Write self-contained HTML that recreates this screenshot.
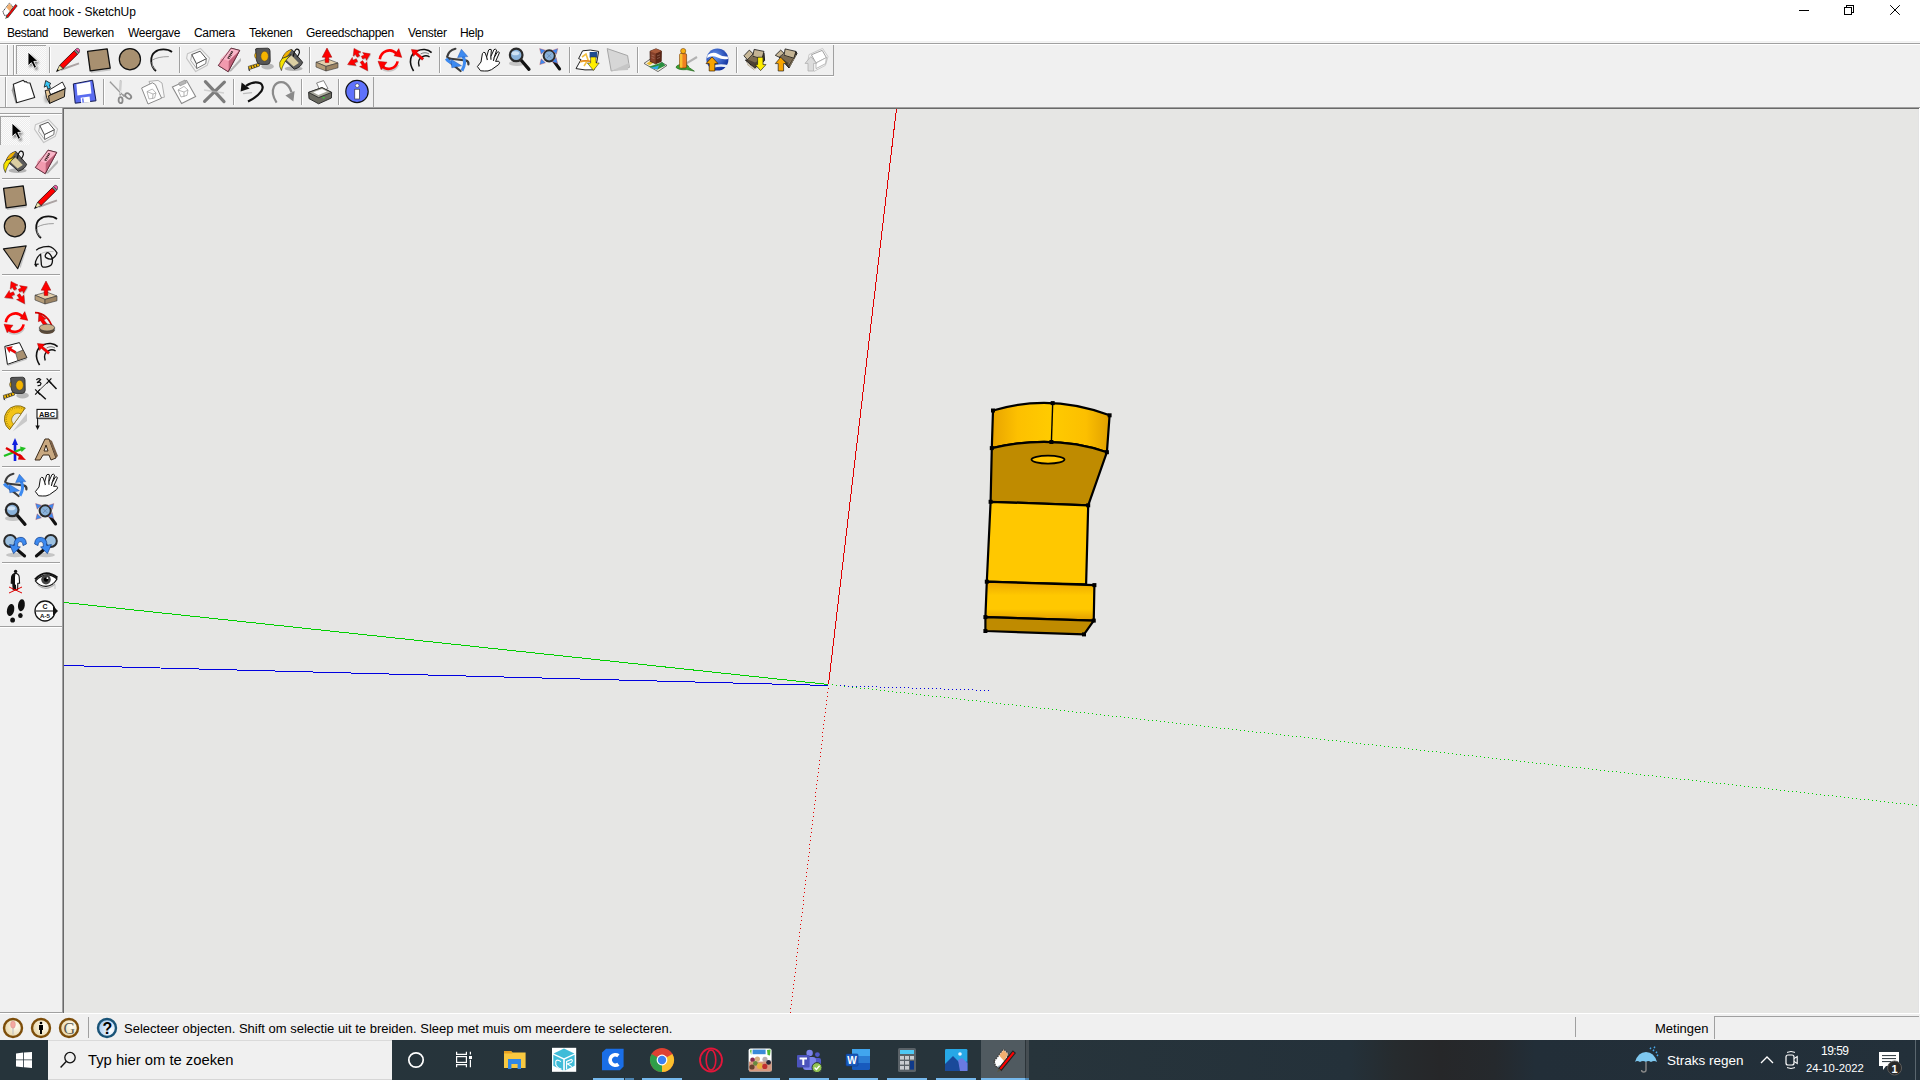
<!DOCTYPE html>
<html><head><meta charset="utf-8">
<style>
*{margin:0;padding:0;box-sizing:border-box}
html,body{width:1920px;height:1080px;overflow:hidden;background:#f0f0f0;font-family:"Liberation Sans",sans-serif;position:relative}
.a{position:absolute}
.t{position:absolute;white-space:pre;line-height:1}
#title{left:0;top:0;width:1920px;height:42px;background:#fff}
.menu{font-size:12px;color:#000;top:27px}
.hl{position:absolute;height:1px}
.vl{position:absolute;width:1px}
svg.i{position:absolute;overflow:visible}
</style></head><body>
<!-- title + menu -->
<div id="title" class="a"></div>
<div class="t" style="left:23px;top:6px;font-size:12px;letter-spacing:-0.1px">coat hook - SketchUp</div>
<div class="t menu" style="left:7px;letter-spacing:-0.43px">Bestand</div>
<div class="t menu" style="left:63px;letter-spacing:-0.3px">Bewerken</div>
<div class="t menu" style="left:128px;letter-spacing:-0.3px">Weergave</div>
<div class="t menu" style="left:194px;letter-spacing:-0.3px">Camera</div>
<div class="t menu" style="left:249px;letter-spacing:-0.3px">Tekenen</div>
<div class="t menu" style="left:306px;letter-spacing:-0.3px">Gereedschappen</div>
<div class="t menu" style="left:408px;letter-spacing:-0.3px">Venster</div>
<div class="t menu" style="left:460px;letter-spacing:-0.3px">Help</div>
<!-- window controls -->
<svg class="a" style="left:1790px;top:0" width="130" height="22"><g fill="none" stroke="#000" stroke-width="1" shape-rendering="crispEdges">
<path d="M9,10.5 H19"/>
<path d="M54.5,7.5 H61.5 V14.5 H54.5 Z"/>
<path d="M56.5,7 V5.5 H63.5 V12.5 H62"/>
</g><path d="M100.2,5.2 L109.8,14.8 M109.8,5.2 L100.2,14.8" stroke="#000" stroke-width="1"/></svg>
<!-- dock lines -->
<div class="hl" style="left:0;top:41px;width:1920px;background:#f1f1f1"></div><div class="hl" style="left:0;top:42px;width:1920px;background:#f5f5f5"></div>
<div class="hl" style="left:0;top:43px;width:1920px;background:#a0a0a0"></div>
<div class="hl" style="left:0;top:44px;width:1920px;background:#fff"></div>


<svg width="0" height="0" style="position:absolute"><defs><filter id="blur1" x="-50%" y="-50%" width="200%" height="200%"><feGaussianBlur stdDeviation=".9"/></filter>
<symbol id="s_select" viewBox="0 0 24 24" overflow="visible"><g transform="translate(9,4) scale(1.1) translate(-9,-5)">
<path d="M9,5 L9,17.6 L12.1,14.7 L14.7,19.8 L16.8,18.8 L14.3,13.6 L18.1,13.4 Z" fill="#000" opacity=".55" transform="translate(1.4,1.8)" filter="url(#blur1)"/>
<path d="M9,5 L9,17.6 L12.1,14.7 L14.7,19.8 L16.8,18.8 L14.3,13.6 L18.1,13.4 Z" fill="#000" stroke="#fff" stroke-width=".8" stroke-linejoin="round"/>
</g></symbol>
<symbol id="s_pencil" viewBox="0 0 24 24" overflow="visible">
<path d="M5,21.8 L23,15.4" stroke="#9a9090" stroke-width="2" opacity=".8"/>
<path d="M3.6,17.2 L18.2,2.8 L21.6,6.2 L7,20.6 Z" fill="#ff0000" stroke="#2a0000" stroke-width=".8"/>
<path d="M18.2,2.8 L19.6,1.4 L23,4.8 L21.6,6.2 Z" fill="#8a8a8a" stroke="#222" stroke-width=".6"/>
<path d="M19.6,1.4 L20.6,.4 Q22,-.2 23.4,1.4 Q24,2.8 23,4.8 Z" fill="#ff5aa8" stroke="#222" stroke-width=".6"/>
<path d="M.5,23.6 L3.6,17.2 L7,20.6 Z" fill="#f2e6a8" stroke="#222" stroke-width=".7"/>
<path d="M.5,23.6 L1.6,21 L3,22.4 Z" fill="#000"/>
</symbol>
<symbol id="s_rect" viewBox="0 0 24 24" overflow="visible">
<path d="M4,25 L23.4,22.4 L24,20.5 L4,22.8 Z" fill="#aaa" opacity=".6"/>
<path d="M0.6,3.4 L20.2,0.8 L23.2,20.2 L3.2,22.9 Z" fill="#a89070" stroke="#111" stroke-width="1.3" stroke-linejoin="round"/>
</symbol>
<symbol id="s_circle" viewBox="0 0 24 24" overflow="visible">
<circle cx="12.6" cy="12" r="10.6" fill="#999" opacity=".5"/>
<circle cx="11.9" cy="11.2" r="10.6" fill="#a89070" stroke="#111" stroke-width="1.2"/>
</symbol>
<symbol id="s_arc" viewBox="0 0 24 24" overflow="visible">
<path d="M7,23 C1,18 .6,8 6,4 C10,.6 18.5,.4 23,4" fill="none" stroke="#111" stroke-width="1.8"/>
<path d="M3,12.2 Q9,8.6 19.8,8.6" fill="none" stroke="#888" stroke-width=".8"/>
<path d="M3,14 Q2.2,19 6.5,22" fill="none" stroke="#aaa" stroke-width=".8"/>
</symbol>
<symbol id="s_comp" viewBox="0 0 24 24" overflow="visible">
<path d="M1.4,5.8 L14.6,.6 L23.6,10.2 L21.3,17.2 L9.7,23.6 L.6,10.4 Z" fill="#f4f4f4" stroke="#c4c4c4" stroke-width="1.1" stroke-linejoin="round"/>
<path d="M5.8,6.5 L10.4,15.6 L10.7,20.5 L4.7,12.5 Z" fill="#f6f6f6" stroke="#9a9a9a" stroke-width=".8"/>
<path d="M10.4,15.6 L20.3,10.7 L19.8,15.6 L10.7,20.5 Z" fill="#fff" stroke="#666" stroke-width=".9"/>
<path d="M5.8,6.5 L14.1,3.2 L20.3,10.7 L10.4,15.6 Z" fill="#fff" stroke="#555" stroke-width="1"/>
</symbol>
<symbol id="s_eraser" viewBox="0 0 24 24" overflow="visible">
<path d="M11.6,23.4 L23.8,10 L24,13 L14,23.6 Z" fill="#8a8a8a" opacity=".6"/>
<path d="M1.4,17.5 L14.1,.2 L22.7,2.4 L11.2,23.7 Z" fill="#f4a6b8" stroke="#4a1a28" stroke-width=".8" stroke-linejoin="round"/>
<path d="M3.9,10.7 L14.1,.2 L22.7,2.4 L11.7,13.1 Z" fill="#f9b6c8"/>
<path d="M1.4,17.5 L3.9,10.7 L11.7,13.1 L11.2,23.7 Z" fill="#f29aae"/>
<path d="M11.7,13.1 L22.7,2.4 L21.8,5 L11.6,22.6 Z" fill="#c06078"/>
<path d="M1.4,17.5 L14.1,.2 L22.7,2.4 L11.2,23.7 Z" fill="none" stroke="#4a1a28" stroke-width=".7" stroke-linejoin="round"/>
<g stroke="#2a1a1a" stroke-width="1"><path d="M10.6,9.8 L12.6,10.6 M11.4,8.2 L13.6,9 M12.4,6.6 L14.6,7.4 M13.2,5 L15.2,5.8 M14,3.6 L16,4.2"/><path d="M10.8,10.4 L15.6,3.6" stroke-width=".6"/></g>
</symbol>
<symbol id="s_tape" viewBox="0 0 24 24" overflow="visible">
<ellipse cx="19.6" cy="18.4" rx="6.2" ry="3" fill="#8a8a8a" opacity=".55"/>
<path d="M.3,18.4 L10.8,15.2 L11.6,18 L1.4,21.6 Z" fill="#f3b800" stroke="#222" stroke-width=".6"/>
<g stroke="#222" stroke-width=".9"><path d="M3,17.8 L3.8,20.6 M5.6,17 L6.4,19.8 M8.2,16.2 L9,19"/></g>
<path d="M.3,18.4 L1.4,21.6 L2.4,23.6 L.6,22.4 Z" fill="#222"/>
<path d="M7.6,1 Q8.6,.2 11,.4 L19.6,.2 Q22,.4 22,3 L22.2,13.4 Q22,16 19.4,16.4 L12.6,16.4 Q8.8,16.2 8.4,12 Z" fill="#565656" stroke="#2a2a2a" stroke-width=".9"/>
<ellipse cx="16.6" cy="8.2" rx="3.8" ry="5" fill="#f5b400" stroke="#3a3a3a" stroke-width=".5"/>
<path d="M8.2,4.8 Q6.6,5 6.6,7.6 Q6.6,10.4 8.4,10.4 Z" fill="#f5b400" stroke="#2a2a2a" stroke-width=".5"/>
</symbol>
<symbol id="s_paint" viewBox="0 0 24 24" overflow="visible">
<ellipse cx="14.6" cy="20.6" rx="9" ry="2.4" fill="#8a8a8a" opacity=".6"/>
<path d="M3.2,10.4 Q6,3 12.8,1.4 L23.6,14.2 Q22.4,19 15.4,21.2 Z" fill="#5c5c5c" stroke="#1a1a1a" stroke-width=".9" stroke-linejoin="round"/>
<path d="M7,11.4 L12.6,7.6 L19.8,15 L14.6,18.6 Z" fill="#dccfa2"/>
<path d="M3.2,10.4 Q6,3 12.8,1.4 Q10,6 7.4,8.4 Z" fill="#f0b000"/>
<path d="M3.2,10.4 Q-.4,14 .8,18.6 L2.4,22.6 L3.4,19 Q5,13.6 12,6.4 Q9,8.6 3.2,10.4 Z" fill="#f8e400" stroke="#1a1a1a" stroke-width=".6"/>
<path d="M14.3,8.7 Q15.4,2 17.4,1.2 Q20.4,.6 20.4,4.6 Q19.8,7 18,9.2" fill="none" stroke="#111" stroke-width="1.2"/>
</symbol>
<symbol id="s_pushpull" viewBox="0 0 24 24" overflow="visible">
<path d="M1,14.2 L12.6,11 L23,15 L11,18.4 Z" fill="#e2cfac" stroke="#333" stroke-width=".6"/>
<path d="M1,14.2 L11,18.4 L11,23 L1,19 Z" fill="#b49c78" stroke="#333" stroke-width=".6"/>
<path d="M11,18.4 L23,15 L23,19.8 L11,23 Z" fill="#9c8464" stroke="#333" stroke-width=".6"/>
<path d="M10.2,14.4 L10.2,9.2 L7.2,9.2 L12,0 L16.8,9.2 L13.8,9.2 L13.8,14.4 Z" fill="#ff0000" stroke="#8a0000" stroke-width=".5"/>
</symbol>
<symbol id="s_move" viewBox="0 0 24 24" overflow="visible">
<path d="M13.7,7.8 L12.1,4.9 L15.0,4.0 L8.0,0.4 L7.2,8.2 L9.5,6.3 L11.0,9.2Z M16.6,11.1 L19.6,9.7 L20.3,12.5 L24.3,5.8 L16.6,4.6 L18.3,6.9 L15.3,8.3Z M10.3,10.7 L6.9,12.3 L6.3,9.4 L1.6,16.6 L10.1,17.4 L8.3,15.1 L11.6,13.4Z M14.1,14.3 L16.4,17.6 L13.5,18.6 L21.6,22.7 L20.9,13.7 L18.8,15.9 L16.6,12.6Z" fill="#999" opacity=".5" transform="translate(.8,1)"/>
<path d="M13.7,7.8 L12.1,4.9 L15.0,4.0 L8.0,0.4 L7.2,8.2 L9.5,6.3 L11.0,9.2Z M16.6,11.1 L19.6,9.7 L20.3,12.5 L24.3,5.8 L16.6,4.6 L18.3,6.9 L15.3,8.3Z M10.3,10.7 L6.9,12.3 L6.3,9.4 L1.6,16.6 L10.1,17.4 L8.3,15.1 L11.6,13.4Z M14.1,14.3 L16.4,17.6 L13.5,18.6 L21.6,22.7 L20.9,13.7 L18.8,15.9 L16.6,12.6Z" fill="#ff0000" stroke="#900" stroke-width=".4"/>
</symbol>
<symbol id="s_rotate" viewBox="0 0 24 24" overflow="visible">
<path d="M3.6,18.4 C8,23.4 17,22.6 20.6,15.6" fill="none" stroke="#999" stroke-width="2" opacity=".5" transform="translate(.6,1.2)"/>
<path d="M2.8,11.2 C4,3 13.6,-.6 19.2,5.4" fill="none" stroke="#ff0000" stroke-width="2.6"/>
<path d="M17,7.8 L21.8,.6 L24.8,9.4 Z" fill="#ff0000" stroke="#900" stroke-width=".4"/>
<path d="M20.6,13.4 C19.4,20.6 9.6,23.6 5,17.6" fill="none" stroke="#ff0000" stroke-width="2.6"/>
<path d="M1,13.2 L10,14.2 L4.2,21.8 Z" fill="#ff0000" stroke="#900" stroke-width=".4"/>
</symbol>
<symbol id="s_followme" viewBox="0 0 24 24" overflow="visible">
<path d="M5.6,23 C0,14 2.4,6 9,3 C14,.6 20,1 23.6,4.6" fill="none" stroke="#111" stroke-width="1.6"/>
<path d="M11.2,18.6 C9.6,14 11,10.4 14.6,8.6 C17,7.4 19.6,7.6 21.6,9" fill="none" stroke="#111" stroke-width="1.4"/>
<path d="M12.6,6 C15.6,4.2 18.6,4.4 21,6" fill="none" stroke="#777" stroke-width="1"/>
<path d="M3.4,1.4 L10.8,2.2 L8.8,4.4 L15.8,10.2 L14.2,12.2 L7.2,6.2 L5.6,8.4 Z" fill="#ff0000" stroke="#800" stroke-width=".4"/>
</symbol>
<symbol id="s_orbit" viewBox="0 0 24 24" overflow="visible">
<path d="M10.4,.8 Q3.4,2.6 2.2,8.8 Q2.6,10.6 8,11 L20.6,12.4 Q24,13.4 23.4,16.4 M3.4,11.6 Q4.6,14.6 8,17 L15.6,23" fill="none" stroke="#3c3c3c" stroke-width="2.2" stroke-linecap="round"/>
<path d="M17,22.6 Q21.6,15 18,8" fill="none" stroke="#3d8af0" stroke-width="3"/>
<path d="M12.6,9.6 L16.4,1.2 L22.8,8.6 Z" fill="#3d8af0" stroke="#1a4aa0" stroke-width=".4"/>
<path d="M1.2,10.6 Q3.6,14.4 9.6,15.6" fill="none" stroke="#3d8af0" stroke-width="3"/>
<path d="M6,11.2 L16.6,17.8 L6.8,19.8 Z" fill="#3d8af0" stroke="#1a4aa0" stroke-width=".4"/>
</symbol>
<symbol id="s_pan" viewBox="0 0 24 24" overflow="visible">
<path d="M1.4,18.6 L5,14 L6.4,5.6 Q7.4,3.6 9,4.6 L10.6,9 L12.6,2 Q14,.6 15.4,1.8 L14.8,8.6 L18,1.6 Q19.6,.6 20.6,2 L18.2,9.6 L21.4,4 Q23,3.2 23.4,4.8 L19.6,13.4 L22.6,13.2 Q24.6,14.6 22.6,16.6 L15.6,21.6 Q12,23.6 8.4,23 L4.6,22.8 Z" fill="#fff" stroke="#111" stroke-width="1" stroke-linejoin="round"/>
<path d="M10.6,9 L11.4,12 M14.8,8.6 L15,11.8 M18.2,9.6 L17.4,12.8" stroke="#111" stroke-width="1.1"/>
</symbol>
<symbol id="s_zoom" viewBox="0 0 24 24" overflow="visible">
<ellipse cx="10" cy="15.4" rx="8" ry="2.6" fill="#999" opacity=".5"/>
<path d="M14,12 L22,21.4" stroke="#111" stroke-width="3.2" stroke-linecap="round"/>
<circle cx="9.2" cy="6.9" r="6.3" fill="#8ab2da" stroke="#2a2a2a" stroke-width="2.2"/>
<ellipse cx="8.4" cy="5.2" rx="3.8" ry="2" fill="#cfe2f4"/>
</symbol>
<symbol id="s_zoomext" viewBox="0 0 24 24" overflow="visible">
<path d="M15,12 L21.6,21" stroke="#111" stroke-width="3" stroke-linecap="round"/>
<circle cx="11.2" cy="7.8" r="5.6" fill="#8ab2da" stroke="#2a2a2a" stroke-width="2"/>
<path d="M9,5.6 L13.4,10 M13.4,5.6 L9,10" stroke="#6a8ab0" stroke-width=".8"/>
<g fill="#3d8af0" stroke="#c03030" stroke-width=".35">
<path d="M1.6,.6 L7.4,2.2 L3.2,6.2 Z"/>
<path d="M19.8,.6 L18.4,6.2 L14.2,2.4 Z"/>
<path d="M1.8,16.6 L3.2,10.8 L7.4,14.8 Z"/>
<path d="M19.6,15.4 L14.2,13.8 L18.2,9.6 Z"/>
</g>
</symbol>
<symbol id="s_phototex" viewBox="0 0 24 24" overflow="visible">
<path d="M1,20.6 L6,11.6 L3.6,10.6 L7.6,2.8 Q15,1 23.6,3.4 L22,13 L19,21.8 Q10,22.6 1,20.6 Z" fill="#fff" stroke="#222" stroke-width="1"/>
<path d="M7,9 L11,6 L13,12 L9,18 M5,14 Q11,12 18,14" fill="none" stroke="#f3c040" stroke-width="1.6"/>
<path d="M5.2,13.2 Q11,11.8 16,13.6" fill="none" stroke="#e08020" stroke-width="1.2"/>
<rect x="14.6" y="4" width="7.6" height="5.6" fill="#1e4c90"/>
<path d="M15.6,9 L21,9 L21,15 L24.2,15 L18.4,22.4 L12.4,15 L15.6,15 Z" fill="#ffee00" stroke="#333" stroke-width=".6"/>
</symbol>
<symbol id="s_terrain" viewBox="0 0 24 24" overflow="visible">
<path d="M1.2,.6 L21.6,7.6 L23.4,19.4 L5.2,23 Z" fill="#d6d6d6" stroke="#a6a6a6" stroke-width="1"/>
<path d="M5,23 L23,15 L22,22 Z" fill="#c6c6c6"/>
</symbol>
<symbol id="s_building" viewBox="0 0 24 24" overflow="visible">
<path d="M1,15.4 L9.4,9.6 L24,17.4 L15,23.6 Z" fill="#f2eedc" stroke="#4a4a4a" stroke-width=".8" stroke-linejoin="round"/>
<path d="M3.6,15.4 L8.6,12.2 L11.6,14 L6.6,17.2 Z" fill="#e8b830"/>
<path d="M5.6,18.8 L19.6,14.2 L22.4,17.4 L14.6,21.6 Z" fill="#2a9040"/>
<path d="M7.4,20 L16,17.4 L14.4,21.6 Z" fill="#30a8ea"/>
<path d="M7,3.2 L13,.8 L18.4,3 L18.2,13.4 L12.6,15.8 L7.2,13.4 Z" fill="#86402a" stroke="#3a1a10" stroke-width=".7" stroke-linejoin="round"/>
<path d="M12.6,5.4 L18.4,3 L18.2,13.4 L12.6,15.8 Z" fill="#5a2616"/>
<path d="M7,3.2 L13,.8 L18.4,3 L12.6,5.4 Z" fill="#a85a3a"/>
<path d="M8.6,7 L11.4,8 M8.6,9.6 L11.4,10.6 M14,8 L17,6.8 M14,10.6 L17,9.4" stroke="#c8a090" stroke-width=".6" opacity=".7"/>
</symbol>
<symbol id="s_person" viewBox="0 0 24 24" overflow="visible">
<path d="M12,15.6 L23,9" stroke="#999" stroke-width="2.2" opacity=".7"/>
<path d="M2,19.4 Q2.6,16.4 9,16.2 Q15,16.4 14.6,19.2 L20.4,23.2 L12.8,21.6 Q5,22.4 2,19.4 Z" fill="#3aa030" stroke="#1a5a10" stroke-width=".6"/>
<rect x="5.6" y="5.6" width="7" height="14.4" rx="1.4" fill="#f08020" stroke="#5a2a00" stroke-width=".6"/>
<rect x="5.8" y="6" width="2.6" height="13.6" fill="#f8c030"/>
<circle cx="9.2" cy="3" r="2.6" fill="#f8b010" stroke="#5a2a00" stroke-width=".5"/>
</symbol>
<symbol id="s_globe" viewBox="0 0 24 24" overflow="visible">
<defs><radialGradient id="gg" cx=".4" cy=".35" r=".7"><stop offset="0" stop-color="#6a9af0"/><stop offset="1" stop-color="#0a2a9a"/></radialGradient></defs>
<circle cx="12.4" cy="11.6" r="11" fill="url(#gg)"/>
<path d="M2.6,7 Q8,3 13,6 Q18,9 22.8,8.4 L23,11 Q17,12 12.6,9.6 Q7,6.6 2,10 Z" fill="#fff"/>
<path d="M7,18 Q14,15 23,17 L22,19.4 Q15,17.6 8,20 Z" fill="#e8eef8"/>
<path d="M1,15.6 L7,9 L13,15.6 L9.8,15.6 L9.8,23 L4.2,23 L4.2,15.6 Z" fill="#f8a400" stroke="#3a2000" stroke-width=".7"/>
</symbol>
<symbol id="s_getmodels" viewBox="0 0 24 24" overflow="visible">
<path d="M3.4,12.2 L12.7,20 L22.6,12.6 L22,5 L11,8.6 L5.4,11.7 Z" fill="#4e4232" stroke="#111" stroke-width=".9" stroke-linejoin="round"/>
<path d="M4.4,14.4 L12.6,20.6 M5.2,16.4 L12.4,22 M13,21 L21.6,15" stroke="#a89878" stroke-width=".8"/>
<path d="M1.9,7.8 L7.3,2.1 L11.2,5.8 L5.4,11.7 Z" fill="#c8b898" stroke="#111" stroke-width=".8" stroke-linejoin="round"/>
<path d="M12.2,1.4 L22,3.4 L20,10.7 L10.7,8.3 Z" fill="#c4b494" stroke="#111" stroke-width=".8" stroke-linejoin="round"/>
<path d="M5.8,11.6 L11,6.4 L10.8,8.6 L19.6,11 L13,14.6 Z" fill="#7c6c52"/>
<path d="M15.6,9.2 L21,9.2 L21,16.6 L24,16.6 L18.6,22.6 L13.2,16.6 L15.6,16.6 Z" fill="#ffee00" stroke="#222" stroke-width=".7" stroke-linejoin="round"/>
</symbol>
<symbol id="s_sharemodel" viewBox="0 0 24 24" overflow="visible">
<path d="M6.2,9.2 L16,20 L24,5.4 L22.9,3.4 L11.1,7.3 Z" fill="#4e4232" stroke="#111" stroke-width=".9" stroke-linejoin="round"/>
<path d="M16.6,18.6 L23,7 M15.4,16.6 L21.4,6.4" stroke="#a89878" stroke-width=".8"/>
<path d="M2.3,7.3 L7.7,2.1 L11.1,5.3 L6.2,9.2 Z" fill="#c8b898" stroke="#111" stroke-width=".8" stroke-linejoin="round"/>
<path d="M12.1,.9 L22.9,3.4 L20.9,10.2 L11.1,7.3 Z" fill="#c4b494" stroke="#111" stroke-width=".8" stroke-linejoin="round"/>
<path d="M7,9 L11,5.8 L11.1,7.6 L20.4,10.6 L15.4,15 Z" fill="#7c6c52"/>
<path d="M7.7,9.2 L13.6,15.6 L10.6,15.6 L10.6,23 L5.2,23 L5.2,15.6 L2.3,15.6 Z" fill="#f8a400" stroke="#222" stroke-width=".7" stroke-linejoin="round"/>
</symbol>
<symbol id="s_sharecomp" viewBox="0 0 24 24" overflow="visible">
<path d="M5,6.6 L18.6,.4 L24,8.6 L21.4,17.4 L10,23.4 L3.6,14.4 Z" fill="#f6f6f6" stroke="#cacaca" stroke-width="1" stroke-linejoin="round"/>
<path d="M7.4,6.8 L18.2,2.4 L22.4,9.6 L12,15 Z" fill="#fff" stroke="#8a8a8a" stroke-width=".8"/>
<path d="M12,15 L22.4,9.6 L21.6,15.6 L12,20.6 Z" fill="#fff" stroke="#aaa" stroke-width=".8"/>
<path d="M6.8,8.6 L12.6,15.4 L9.6,15.4 L9.6,23 L4,23 L4,15.4 L1,15.4 Z" fill="#dcdcdc" stroke="#b0b0b0" stroke-width=".8" stroke-linejoin="round"/>
</symbol>
<symbol id="s_new" viewBox="0 0 24 24" overflow="visible">
<path d="M.7,10.3 L2.3,4.2 L5.7,22.8 L4.6,23.4 Z" fill="#777" opacity=".7"/>
<path d="M2.3,4.2 L12.3,.3 L14,2 L15.2,1.6 L16.4,2.8 L19,3 L23.7,17.5 L5.7,22.8 Z" fill="#fff" stroke="#222" stroke-width="1.1" stroke-linejoin="round"/>
</symbol>
<symbol id="s_open" viewBox="0 0 24 24" overflow="visible">
<path d="M2,16.6 L5.4,14 L7,22.6 L3,22.6 Z" fill="#777" opacity=".5" filter="url(#blur1)"/>
<path d="M6.6,10.4 L20.4,2 L23.6,8.4 L8.6,14.6 Z" fill="#fff" stroke="#111" stroke-width=".9" stroke-linejoin="round"/>
<path d="M3.2,10.6 L6.8,9.8 L8.6,15.2 L7.6,23.4 L4.6,17.6 Z" fill="#e8c898" stroke="#111" stroke-width=".9" stroke-linejoin="round"/>
<path d="M6.6,15.8 L23,8.8 L22.4,16.8 L7.6,23.4 Z" fill="#b49c78" stroke="#111" stroke-width="1" stroke-linejoin="round"/>
<path d="M3.7,.6 L9,3.6 L7.4,4.8 L8.4,8.2 L5.8,9 L4.8,5.8 L2.2,7.2 Z" fill="#38c8f8" stroke="#111" stroke-width=".8" stroke-linejoin="round"/>
</symbol>
<symbol id="s_save" viewBox="0 0 24 24" overflow="visible">
<path d="M0.3,3.9 L19.6,0.2 L23,20.8 L2.2,23.2 Z" fill="#5a6cf0" stroke="#141a50" stroke-width="1" stroke-linejoin="round"/>
<path d="M3.4,4.2 L17.2,1.8 L18.4,13.4 L4.4,15.4 Z" fill="#fff"/>
<path d="M7.6,17.8 L16.6,16.6 L17.2,22.2 L8.2,23 Z" fill="#fff"/>
<path d="M9,18.4 L10.4,18.2 L10.9,22.6 L9.5,22.8 Z" fill="#5a6cf0"/>
</symbol>
<symbol id="s_cut" viewBox="0 0 24 24" overflow="visible">
<path d="M0,1.6 L14.6,16.6 M10.6,.4 L10.2,15.4" stroke="#9a9a9a" stroke-width="1.6"/>
<path d="M1,1.4 L13,14 M10.4,1 L10.4,14" stroke="#fff" stroke-width=".6"/>
<ellipse cx="18.2" cy="16" rx="3.4" ry="2.2" transform="rotate(40 18.2 16)" fill="none" stroke="#8a8a8a" stroke-width="1.8"/>
<ellipse cx="10.6" cy="20.2" rx="2" ry="3" fill="none" stroke="#8a8a8a" stroke-width="1.8"/>
</symbol>
<symbol id="s_copy" viewBox="0 0 24 24" overflow="visible">
<path d="M8,1.4 L17,.4 L21,3 L23.4,17.2 L14,18.6 Z" fill="#f8f8f8" stroke="#a8a8a8" stroke-width=".9"/>
<path d="M.6,8 L11.4,2.8 L14.4,4.6 L20.6,18.2 L7,24 Z" fill="#fff" stroke="#8a8a8a" stroke-width="1"/>
<path d="M6,11.6 L11.4,9 L15,13 L13.6,18 L8,19 Z M6,11.6 L12,14 L15,13 M12,14 L11.6,18.6" fill="none" stroke="#9a9a9a" stroke-width=".7"/>
</symbol>
<symbol id="s_paste" viewBox="0 0 24 24" overflow="visible">
<path d="M.4,7 L14.6,.6 L23.6,16.4 L9.6,23.4 Z" fill="#fff" stroke="#8a8a8a" stroke-width="1.1"/>
<path d="M6.6,3 L13,0 L14.4,3 L8,6 Z" fill="#b6b6b6" stroke="#8a8a8a" stroke-width=".6"/>
<path d="M6,10 L12,6.4 L16,10 L15,15.4 L9,17 Z M6,10 L12,12 L16,10 M12,12 L12,17" fill="none" stroke="#9a9a9a" stroke-width=".7"/>
</symbol>
<symbol id="s_delete" viewBox="0 0 24 24" overflow="visible">
<path d="M2.4,1.6 L21,21.6 M21.4,2.2 L1.6,21.4" stroke="#7c7c7c" stroke-width="3.2" stroke-linecap="round"/>
<path d="M1,10 L21,13" stroke="#bbb" stroke-width="1.4" opacity=".6"/>
</symbol>
<symbol id="s_undo" viewBox="0 0 24 24" overflow="visible">
<path d="M6,5.8 Q14,.6 20.4,3.2 Q24.4,6 21.4,11.2 Q16.6,17.6 8,21.6" fill="none" stroke="#111" stroke-width="2.2"/>
<path d="M.6,11.6 L1.6,2.4 L9.6,8.4 Z" fill="#111"/>
<path d="M3,13.6 L12,12.6" stroke="#999" stroke-width="1.2" opacity=".6"/>
</symbol>
<symbol id="s_redo" viewBox="0 0 24 24" overflow="visible">
<path d="M5.6,22.6 Q-.4,13.6 3,6.6 Q6,1 12.6,2.4 Q18,4.4 20.6,12.4" fill="none" stroke="#8a8a8a" stroke-width="2.2"/>
<path d="M23.6,11 L22.4,21.4 L14.4,15.4 Z" fill="#8a8a8a"/>
</symbol>
<symbol id="s_print" viewBox="0 0 24 24" overflow="visible">
<path d="M8.6,3 L15.6,.6 L20,8.6 L12.4,11.4 Z" fill="#fff" stroke="#666" stroke-width=".8"/>
<path d="M.6,12.4 L14,7.6 L23.6,12.4 L23.4,18 L10.6,23.8 L1,18.6 Z" fill="#6a6a60" stroke="#222" stroke-width=".9"/>
<path d="M.6,12.4 L14,7.6 L23.6,12.4 L10.6,17.6 Z" fill="#a8a89c" stroke="#222" stroke-width=".8"/>
<path d="M5.2,12.2 L14,9 L19,11.6 L10.4,15 Z" fill="#fff"/>
<rect x="14.6" y="17" width="2" height="1.4" fill="#30d030"/>
</symbol>
<symbol id="s_info" viewBox="0 0 24 24" overflow="visible">
<circle cx="12" cy="11.5" r="11.2" fill="#5f72fc" stroke="#111"  stroke-width="1.2"/>
<circle cx="12.2" cy="5.6" r="1.9" fill="#fff" stroke="#222" stroke-width=".5"/>
<rect x="9.8" y="9.2" width="4.6" height="9.8" fill="#fff" stroke="#222" stroke-width=".6"/>
</symbol>
<symbol id="s_polygon" viewBox="0 0 24 24" overflow="visible">
<path d="M16,6 L23.6,3 L17.6,22 L15,19 Z" fill="#999" opacity=".5"/>
<path d="M.4,2.9 L23.2,-.1 L14.7,22.8 Z" fill="#a89070" stroke="#111" stroke-width="1.1" stroke-linejoin="round"/>
</symbol>
<symbol id="s_freehand" viewBox="0 0 24 24" overflow="visible">
<path d="M6.6,8 Q11,5 19.6,5.6" fill="none" stroke="#bbb" stroke-width=".9"/>
<path d="M2.2,4.3 L4.9,2.3 Q9,.4 14.7,.4 Q19.7,1.4 23,6.8 Q22.4,9.6 18.6,12.6 Q15.6,14 12,11.6 Q10,9.6 13,6.8 Q15,6 17.4,10.4 Q19.6,14.4 17.4,18.7 Q14.6,21.2 9.1,21.2 Q7.4,20 7.4,18.7 L6.6,8.2 Q3.6,10 1.6,15.4 L1.3,18.4 L4.7,18.2" fill="none" stroke="#111" stroke-width="1.3" stroke-linejoin="round"/>
<path d="M1,18 L2.6,20.4" stroke="#111" stroke-width="1.8"/>
</symbol>
<symbol id="s_scale" viewBox="0 0 24 24" overflow="visible">
<path d="M1.8,4.4 L16.4,.6 L23.8,15.6 L4.4,22.4 Z" fill="#fff" stroke="#111" stroke-width="1"/>
<path d="M12.6,11 L20,8 L23.8,15.6 L14.8,18.6 Z" fill="#a89070" stroke="#333" stroke-width=".6"/>
<path d="M3.4,5.4 L9.4,4.6 L8.2,6.6 L13.2,9.6 L12.2,11.4 L7,8.4 L6.4,10.6 Z" fill="#ff0000" stroke="#800" stroke-width=".4"/>
<path d="M4.6,23.4 L23.8,17" stroke="#999" stroke-width="1.2" opacity=".6"/>
</symbol>
<symbol id="s_followme2" viewBox="0 0 24 24" overflow="visible">
<path d="M1,1.6 Q14,2 19,18" fill="none" stroke="#d00000" stroke-width="1.6"/>
<path d="M4,9 L8,1.6 L12,9.6 L9.6,9.6 L11,15 L7.6,16 L6.4,9 Z" fill="#ff0000" stroke="#800" stroke-width=".4" transform="rotate(-25 8 9)"/>
<ellipse cx="13" cy="19.6" rx="7.6" ry="3.4" fill="#5a4a3a"/>
<ellipse cx="13" cy="16.6" rx="7.6" ry="3.4" fill="#c8b08a" stroke="#333" stroke-width=".6"/>
<path d="M5.4,16.6 L5.4,19.6 M20.6,16.6 L20.6,19.6" stroke="#333" stroke-width=".6"/>
</symbol>
<symbol id="s_dimension" viewBox="0 0 24 24" overflow="visible">
<path d="M3.6,14.8 L15,4" stroke="#111" stroke-width=".8"/>
<path d="M15,4 L22.5,12 M3.6,14.8 L11.8,22.2" stroke="#111" stroke-width="1.5"/>
<path d="M12.6,1.4 L17.4,6.6 M17.4,1.4 L12.6,6.6 M1.2,12.4 L6,17.6 M6,12.4 L1.2,17.6" stroke="#111" stroke-width="1.2"/>
<path d="M2.4,3 Q4.6,.4 6.6,2.6 L3,5.8 Q5.8,4.2 7,6.6 Q6.6,9 3.6,8.6" fill="none" stroke="#111" stroke-width="1.2"/>
</symbol>
<symbol id="s_protractor" viewBox="0 0 24 24" overflow="visible">
<path d="M24,6 L9.6,24.6 L24,14 Z" fill="#999" opacity=".45"/>
<path d="M22.3,1 L6.6,22.7 A13.4,13.4 0 0 1 22.3,1 Z" fill="#f3c418" stroke="#6a5000" stroke-width=".8" stroke-linejoin="round"/>
<path d="M18,7 L10.6,17.2 A6.4,6.4 0 0 1 18,7 Z" fill="#e8e8e0" stroke="#7a6000" stroke-width=".6"/>
<path d="M6.6,22.7 A13.4,13.4 0 0 1 22.3,1" fill="none" stroke="#8a6a00" stroke-width="1.6" stroke-dasharray=".6 1.6" transform="translate(14.45 11.85) scale(.86) translate(-14.45 -11.85)"/>
</symbol>
<symbol id="s_text" viewBox="0 0 24 24" overflow="visible">
<rect x="5" y="4" width="20" height="9" fill="#aaa" opacity=".5"/>
<rect x="3" y="2.4" width="20" height="8.8" fill="#fff" stroke="#111" stroke-width="1.1"/>
<text x="13" y="9.8" font-family="Liberation Sans" font-size="7.4" font-weight="bold" text-anchor="middle" fill="#111">ABC</text>
<path d="M3.6,11 L3.6,21" stroke="#111" stroke-width="1.1"/>
<path d="M1.4,18.6 L3.6,23 L5.8,18.6 Z" fill="#111"/>
</symbol>
<symbol id="s_axes" viewBox="0 0 24 24" overflow="visible">
<path d="M12,23 L12,5" stroke="#1020e0" stroke-width="2.6"/>
<path d="M9,7 L12,0 L15,7 Z" fill="#1020e0"/>
<path d="M1,18 L19,11" stroke="#20c020" stroke-width="2.4"/>
<path d="M17,8.6 L23,10 L18.6,14 Z" fill="#20c020"/>
<path d="M3,10 L19,19" stroke="#e00000" stroke-width="2.4"/>
<path d="M16.6,15.6 L23,22 L15,21.6 Z" fill="#e00000"/>
</symbol>
<symbol id="s_text3d" viewBox="0 0 24 24" overflow="visible">
<path d="M1,22 L11,1 L15,1 L22,20 L17,22 L15,17 L9,17 L6,22 Z M10,13 L14,13 L12,7 Z" fill="#c8a880" stroke="#3a2a1a" stroke-width="1"/>
<path d="M15,1 L18,3 L24,18 L22,20 Z" fill="#7a6048"/>
</symbol>
<symbol id="s_prev" viewBox="0 0 24 24" overflow="visible">
<ellipse cx="12" cy="21" rx="9" ry="2.2" fill="#999" opacity=".5"/>
<path d="M11,13 L21.6,22" stroke="#111" stroke-width="3" stroke-linecap="round"/>
<circle cx="7.2" cy="7" r="6" fill="#9cc0e0" stroke="#2a2a2a" stroke-width="2"/>
<path d="M23.4,10 Q23,2.4 16.4,3.4 Q10.6,4.6 11.2,11.4 L6.6,10.6 L10.6,19.6 L17.4,13 L14.6,12.6 Q14,8.2 16.8,7.6 Q19.8,7.4 20,11.6 Z" fill="#3d8af0" stroke="#0a3a8a" stroke-width=".7" stroke-linejoin="round"/>
</symbol>
<symbol id="s_next" viewBox="0 0 24 24" overflow="visible"><g transform="translate(24,0) scale(-1,1)">
<ellipse cx="12" cy="21" rx="9" ry="2.2" fill="#999" opacity=".5"/>
<path d="M11,13 L21.6,22" stroke="#111" stroke-width="3" stroke-linecap="round"/>
<circle cx="7.2" cy="7" r="6" fill="#9cc0e0" stroke="#2a2a2a" stroke-width="2"/>
<path d="M23.4,10 Q23,2.4 16.4,3.4 Q10.6,4.6 11.2,11.4 L6.6,10.6 L10.6,19.6 L17.4,13 L14.6,12.6 Q14,8.2 16.8,7.6 Q19.8,7.4 20,11.6 Z" fill="#3d8af0" stroke="#0a3a8a" stroke-width=".7" stroke-linejoin="round"/>
</g></symbol>
<symbol id="s_poscam" viewBox="0 0 24 24" overflow="visible">
<path d="M12.5,4.2 Q9,5 8.6,8 L8.2,14.2 L9.8,14.2 L10.2,20.6 L12,20.6 L12.4,16 L12.8,20.6 L14.6,20.6 L14.8,14.2 L16.6,14.2 L16.2,8 Q16,5 12.5,4.2 Z" fill="#fff" stroke="#111" stroke-width="1.1" stroke-linejoin="round"/>
<path d="M12.5,4.2 Q9,5 8.6,8 L8.2,14.2 L9.8,14.2 L10.2,20.6 L12,20.6 L12,8 Z" fill="#111"/>
<circle cx="12.6" cy="2.4" r="1.7" fill="#111"/>
<path d="M6,18 L19,24 M19,18 L6,24" stroke="#e00000" stroke-width="1"/>
</symbol>
<symbol id="s_lookaround" viewBox="0 0 24 24" overflow="visible">
<path d="M1.4,12 Q12,1 23,10 Q19,17 12,17.4 Q5,17 1.4,12 Z" fill="#fff" stroke="#111" stroke-width="1.2"/>
<path d="M1,10.4 Q11,-1 23.4,8.6" fill="none" stroke="#111" stroke-width="2"/>
<circle cx="12" cy="10.6" r="4.8" fill="#444"/>
<circle cx="12" cy="10.6" r="2.2" fill="#000"/>
<circle cx="13.4" cy="9.2" r=".9" fill="#fff"/>
<path d="M4,16 Q12,23 21,15" fill="none" stroke="#999" stroke-width="1.4" opacity=".7"/>
<path d="M19,13 Q22,16 21,20" fill="none" stroke="#aaa" stroke-width="1" opacity=".6"/>
</symbol>
<symbol id="s_walk" viewBox="0 0 24 24" overflow="visible">
<ellipse cx="7.6" cy="11" rx="3.6" ry="6.2" transform="rotate(12 7.6 11)" fill="#111"/>
<ellipse cx="9.6" cy="21" rx="2.4" ry="2.6" fill="#111"/>
<ellipse cx="18.4" cy="6.2" rx="3.4" ry="6" transform="rotate(8 18.4 6.2)" fill="#111"/>
<ellipse cx="17.4" cy="16.4" rx="2.3" ry="2.5" fill="#111"/>
</symbol>
<symbol id="s_section" viewBox="0 0 24 24" overflow="visible">
<circle cx="11" cy="12" r="10" fill="#fff" stroke="#111" stroke-width="1.3"/>
<path d="M19,7 L24,12 L19,17 Z" fill="#111"/>
<path d="M1.6,12 L20,12" stroke="#111" stroke-width="1"/>
<text x="11" y="9.8" font-family="Liberation Sans" font-size="7" font-weight="bold" text-anchor="middle" fill="#111">C</text>
<text x="11" y="19.4" font-family="Liberation Sans" font-size="6.2" font-weight="bold" text-anchor="middle" fill="#111">A-5</text>
</symbol>
<symbol id="s_appicon" viewBox="0 0 24 24" overflow="visible">
<path d="M3,14 L9,3 L15,6 L10,16 Z" fill="#f4d0b0" stroke="#333" stroke-width=".8"/>
<path d="M4,12 Q3,16 6,17 L10,16" fill="#c8a080" stroke="#333" stroke-width=".6"/>
<path d="M7,17 L19,2 L21,3.6 L9,18.6 Z" fill="#e02020" stroke="#300" stroke-width=".5"/>
</symbol>
</defs></svg>
<div class="hl" style="left:0px;top:75px;width:834px;background:#a0a0a0"></div>
<div class="hl" style="left:0px;top:76px;width:834px;background:#ffffff"></div>
<div class="vl" style="left:833px;top:45px;height:31px;background:#a0a0a0"></div>
<div class="vl" style="left:7px;top:45px;height:30px;background:#a0a0a0"></div>
<div class="vl" style="left:8px;top:45px;height:30px;background:#ffffff"></div>
<div class="vl" style="left:13px;top:45px;height:30px;background:#a0a0a0"></div>
<div class="vl" style="left:14px;top:45px;height:30px;background:#ffffff"></div>
<div class="a" style="left:16px;top:45px;width:30px;height:29px;border-top:1px solid #a0a0a0;border-left:1px solid #a0a0a0;background:repeating-conic-gradient(#ececec 0 25%,#fbfbfb 0 50%) 0 0/2px 2px"></div>
<svg class="i" style="left:19.0px;top:48.0px" width="24" height="24"><use href="#s_select"/></svg>
<svg class="i" style="left:56.0px;top:48.0px" width="24" height="24"><use href="#s_pencil"/></svg>
<svg class="i" style="left:87.0px;top:48.0px" width="24" height="24"><use href="#s_rect"/></svg>
<svg class="i" style="left:118.0px;top:48.0px" width="24" height="24"><use href="#s_circle"/></svg>
<svg class="i" style="left:149.0px;top:48.0px" width="24" height="24"><use href="#s_arc"/></svg>
<svg class="i" style="left:186.0px;top:48.0px" width="24" height="24"><use href="#s_comp"/></svg>
<svg class="i" style="left:217.0px;top:48.0px" width="24" height="24"><use href="#s_eraser"/></svg>
<svg class="i" style="left:248.0px;top:48.0px" width="24" height="24"><use href="#s_tape"/></svg>
<svg class="i" style="left:279.0px;top:48.0px" width="24" height="24"><use href="#s_paint"/></svg>
<svg class="i" style="left:315.0px;top:48.0px" width="24" height="24"><use href="#s_pushpull"/></svg>
<svg class="i" style="left:346.0px;top:48.0px" width="24" height="24"><use href="#s_move"/></svg>
<svg class="i" style="left:377.0px;top:48.0px" width="24" height="24"><use href="#s_rotate"/></svg>
<svg class="i" style="left:408.0px;top:48.0px" width="24" height="24"><use href="#s_followme"/></svg>
<svg class="i" style="left:445.0px;top:48.0px" width="24" height="24"><use href="#s_orbit"/></svg>
<svg class="i" style="left:476.0px;top:48.0px" width="24" height="24"><use href="#s_pan"/></svg>
<svg class="i" style="left:507.0px;top:48.0px" width="24" height="24"><use href="#s_zoom"/></svg>
<svg class="i" style="left:538.0px;top:48.0px" width="24" height="24"><use href="#s_zoomext"/></svg>
<svg class="i" style="left:575.0px;top:48.0px" width="24" height="24"><use href="#s_phototex"/></svg>
<svg class="i" style="left:606.0px;top:48.0px" width="24" height="24"><use href="#s_terrain"/></svg>
<svg class="i" style="left:643.0px;top:48.0px" width="24" height="24"><use href="#s_building"/></svg>
<svg class="i" style="left:674.0px;top:48.0px" width="24" height="24"><use href="#s_person"/></svg>
<svg class="i" style="left:705.0px;top:48.0px" width="24" height="24"><use href="#s_globe"/></svg>
<svg class="i" style="left:742.0px;top:48.0px" width="24" height="24"><use href="#s_getmodels"/></svg>
<svg class="i" style="left:773.0px;top:48.0px" width="24" height="24"><use href="#s_sharemodel"/></svg>
<svg class="i" style="left:804.0px;top:48.0px" width="24" height="24"><use href="#s_sharecomp"/></svg>
<div class="vl" style="left:49px;top:47px;height:26px;background:#a0a0a0"></div>
<div class="vl" style="left:50px;top:47px;height:26px;background:#ffffff"></div>
<div class="vl" style="left:179px;top:47px;height:26px;background:#a0a0a0"></div>
<div class="vl" style="left:180px;top:47px;height:26px;background:#ffffff"></div>
<div class="vl" style="left:309px;top:47px;height:26px;background:#a0a0a0"></div>
<div class="vl" style="left:310px;top:47px;height:26px;background:#ffffff"></div>
<div class="vl" style="left:439px;top:47px;height:26px;background:#a0a0a0"></div>
<div class="vl" style="left:440px;top:47px;height:26px;background:#ffffff"></div>
<div class="vl" style="left:569px;top:47px;height:26px;background:#a0a0a0"></div>
<div class="vl" style="left:570px;top:47px;height:26px;background:#ffffff"></div>
<div class="vl" style="left:637px;top:47px;height:26px;background:#a0a0a0"></div>
<div class="vl" style="left:638px;top:47px;height:26px;background:#ffffff"></div>
<div class="vl" style="left:736px;top:47px;height:26px;background:#a0a0a0"></div>
<div class="vl" style="left:737px;top:47px;height:26px;background:#ffffff"></div>
<div class="hl" style="left:0px;top:107px;width:374px;background:#a0a0a0"></div>
<div class="vl" style="left:373px;top:77px;height:31px;background:#a0a0a0"></div>
<div class="vl" style="left:5px;top:77px;height:30px;background:#a0a0a0"></div>
<div class="vl" style="left:6px;top:77px;height:30px;background:#ffffff"></div>
<svg class="i" style="left:11.0px;top:80.0px" width="24" height="24"><use href="#s_new"/></svg>
<svg class="i" style="left:42.0px;top:80.0px" width="24" height="24"><use href="#s_open"/></svg>
<svg class="i" style="left:73.0px;top:80.0px" width="24" height="24"><use href="#s_save"/></svg>
<svg class="i" style="left:110.0px;top:80.0px" width="24" height="24"><use href="#s_cut"/></svg>
<svg class="i" style="left:141.0px;top:80.0px" width="24" height="24"><use href="#s_copy"/></svg>
<svg class="i" style="left:172.0px;top:80.0px" width="24" height="24"><use href="#s_paste"/></svg>
<svg class="i" style="left:203.0px;top:80.0px" width="24" height="24"><use href="#s_delete"/></svg>
<svg class="i" style="left:240.0px;top:80.0px" width="24" height="24"><use href="#s_undo"/></svg>
<svg class="i" style="left:271.0px;top:80.0px" width="24" height="24"><use href="#s_redo"/></svg>
<svg class="i" style="left:308.0px;top:80.0px" width="24" height="24"><use href="#s_print"/></svg>
<svg class="i" style="left:345.0px;top:80.0px" width="24" height="24"><use href="#s_info"/></svg>
<div class="vl" style="left:103px;top:79px;height:26px;background:#a0a0a0"></div>
<div class="vl" style="left:104px;top:79px;height:26px;background:#ffffff"></div>
<div class="vl" style="left:233px;top:79px;height:26px;background:#a0a0a0"></div>
<div class="vl" style="left:234px;top:79px;height:26px;background:#ffffff"></div>
<div class="vl" style="left:301px;top:79px;height:26px;background:#a0a0a0"></div>
<div class="vl" style="left:302px;top:79px;height:26px;background:#ffffff"></div>
<div class="vl" style="left:338px;top:79px;height:26px;background:#a0a0a0"></div>
<div class="vl" style="left:339px;top:79px;height:26px;background:#ffffff"></div>
<div class="hl" style="left:0px;top:113px;width:62px;background:#a0a0a0"></div>
<div class="hl" style="left:0px;top:114px;width:62px;background:#ffffff"></div>
<div class="a" style="left:0px;top:116px;width:30px;height:29px;border-top:1px solid #a0a0a0;border-left:1px solid #a0a0a0;background:repeating-conic-gradient(#ececec 0 25%,#fbfbfb 0 50%) 0 0/2px 2px"></div>
<svg class="i" style="left:2.6999999999999993px;top:119.0px" width="24" height="24"><use href="#s_select"/></svg>
<svg class="i" style="left:34.0px;top:119.0px" width="24" height="24"><use href="#s_comp"/></svg>
<svg class="i" style="left:2.6999999999999993px;top:149.5px" width="24" height="24"><use href="#s_paint"/></svg>
<svg class="i" style="left:34.0px;top:149.5px" width="24" height="24"><use href="#s_eraser"/></svg>
<svg class="i" style="left:2.6999999999999993px;top:184.5px" width="24" height="24"><use href="#s_rect"/></svg>
<svg class="i" style="left:34.0px;top:184.5px" width="24" height="24"><use href="#s_pencil"/></svg>
<svg class="i" style="left:2.6999999999999993px;top:215.0px" width="24" height="24"><use href="#s_circle"/></svg>
<svg class="i" style="left:34.0px;top:215.0px" width="24" height="24"><use href="#s_arc"/></svg>
<svg class="i" style="left:2.6999999999999993px;top:245.5px" width="24" height="24"><use href="#s_polygon"/></svg>
<svg class="i" style="left:34.0px;top:245.5px" width="24" height="24"><use href="#s_freehand"/></svg>
<svg class="i" style="left:2.6999999999999993px;top:280.5px" width="24" height="24"><use href="#s_move"/></svg>
<svg class="i" style="left:34.0px;top:280.5px" width="24" height="24"><use href="#s_pushpull"/></svg>
<svg class="i" style="left:2.6999999999999993px;top:311.0px" width="24" height="24"><use href="#s_rotate"/></svg>
<svg class="i" style="left:34.0px;top:311.0px" width="24" height="24"><use href="#s_followme2"/></svg>
<svg class="i" style="left:2.6999999999999993px;top:341.5px" width="24" height="24"><use href="#s_scale"/></svg>
<svg class="i" style="left:34.0px;top:341.5px" width="24" height="24"><use href="#s_followme"/></svg>
<svg class="i" style="left:2.6999999999999993px;top:376.5px" width="24" height="24"><use href="#s_tape"/></svg>
<svg class="i" style="left:34.0px;top:376.5px" width="24" height="24"><use href="#s_dimension"/></svg>
<svg class="i" style="left:2.6999999999999993px;top:407.0px" width="24" height="24"><use href="#s_protractor"/></svg>
<svg class="i" style="left:34.0px;top:407.0px" width="24" height="24"><use href="#s_text"/></svg>
<svg class="i" style="left:2.6999999999999993px;top:437.5px" width="24" height="24"><use href="#s_axes"/></svg>
<svg class="i" style="left:34.0px;top:437.5px" width="24" height="24"><use href="#s_text3d"/></svg>
<svg class="i" style="left:2.6999999999999993px;top:472.5px" width="24" height="24"><use href="#s_orbit"/></svg>
<svg class="i" style="left:34.0px;top:472.5px" width="24" height="24"><use href="#s_pan"/></svg>
<svg class="i" style="left:2.6999999999999993px;top:503.0px" width="24" height="24"><use href="#s_zoom"/></svg>
<svg class="i" style="left:34.0px;top:503.0px" width="24" height="24"><use href="#s_zoomext"/></svg>
<svg class="i" style="left:2.6999999999999993px;top:533.5px" width="24" height="24"><use href="#s_prev"/></svg>
<svg class="i" style="left:34.0px;top:533.5px" width="24" height="24"><use href="#s_next"/></svg>
<svg class="i" style="left:2.6999999999999993px;top:568.5px" width="24" height="24"><use href="#s_poscam"/></svg>
<svg class="i" style="left:34.0px;top:568.5px" width="24" height="24"><use href="#s_lookaround"/></svg>
<svg class="i" style="left:2.6999999999999993px;top:599.0px" width="24" height="24"><use href="#s_walk"/></svg>
<svg class="i" style="left:34.0px;top:599.0px" width="24" height="24"><use href="#s_section"/></svg>
<div class="hl" style="left:2px;top:178px;width:58px;background:#a0a0a0"></div>
<div class="hl" style="left:2px;top:179px;width:58px;background:#ffffff"></div>
<div class="hl" style="left:2px;top:274px;width:58px;background:#a0a0a0"></div>
<div class="hl" style="left:2px;top:275px;width:58px;background:#ffffff"></div>
<div class="hl" style="left:2px;top:370px;width:58px;background:#a0a0a0"></div>
<div class="hl" style="left:2px;top:371px;width:58px;background:#ffffff"></div>
<div class="hl" style="left:2px;top:466px;width:58px;background:#a0a0a0"></div>
<div class="hl" style="left:2px;top:467px;width:58px;background:#ffffff"></div>
<div class="hl" style="left:2px;top:562px;width:58px;background:#a0a0a0"></div>
<div class="hl" style="left:2px;top:563px;width:58px;background:#ffffff"></div>
<div class="hl" style="left:0px;top:626px;width:62px;background:#a0a0a0"></div>
<div class="hl" style="left:0px;top:627px;width:62px;background:#ffffff"></div>
<div class="hl" style="left:0px;top:1012px;width:62px;background:#a0a0a0"></div>
<div class="hl" style="left:0px;top:1013px;width:62px;background:#ffffff"></div>


<!-- viewport -->
<div class="a" style="left:62px;top:107px;width:1858px;height:1px;background:#a0a0a0"></div>
<div class="a" style="left:0;top:107px;width:62px;height:1px;background:#a0a0a0"></div>
<div class="a" style="left:63px;top:108px;width:1857px;height:1px;background:#696969"></div>
<div class="a" style="left:62px;top:108px;width:1px;height:905px;background:#a0a0a0"></div>
<div class="a" style="left:63px;top:108px;width:1px;height:905px;background:#696969"></div>
<div class="a" style="left:64px;top:109px;width:1854px;height:904px;background:#e6e6e4"></div>
<div class="a" style="left:1918px;top:109px;width:1px;height:904px;background:#e3e3e3"></div>
<div class="a" style="left:1919px;top:108px;width:1px;height:906px;background:#fff"></div>
<div class="a" style="left:62px;top:1013px;width:1858px;height:1px;background:#fff"></div>

<svg class="a" style="left:0;top:0" width="1920" height="1080">
<defs><clipPath id="vp"><rect x="64" y="109" width="1854" height="904"/></clipPath>
<linearGradient id="cylT" x1="0" y1="0" x2="1" y2="0"><stop offset="0" stop-color="#e8a400"/><stop offset=".22" stop-color="#fdc000"/><stop offset=".5" stop-color="#ffcb00"/><stop offset=".8" stop-color="#fcbf00"/><stop offset="1" stop-color="#e0a000"/></linearGradient>
<linearGradient id="cylB" x1="0" y1="0" x2="0" y2="1"><stop offset="0" stop-color="#eba600"/><stop offset=".35" stop-color="#ffc800"/><stop offset=".7" stop-color="#ffc800"/><stop offset="1" stop-color="#e09c00"/></linearGradient>
</defs><g clip-path="url(#vp)">
<g shape-rendering="crispEdges" stroke-width="1" fill="none">
<path d="M828.5,684.5 L896.5,108.5" stroke="#e00000"/>
<path d="M828.5,684.5 L64.5,602.5" stroke="#00d000"/>
<path d="M828.5,685.5 L64.5,665.5" stroke="#0000e0"/>
</g>
<path d="M828,688h1v1h-1zM827,692h1v1h-1zM827,696h1v1h-1zM826,700h1v1h-1zM826,704h1v1h-1zM825,708h1v1h-1zM825,712h1v1h-1zM824,716h1v1h-1zM824,720h1v1h-1zM823,724h1v1h-1zM823,728h1v1h-1zM822,732h1v1h-1zM822,736h1v1h-1zM822,740h1v1h-1zM821,744h1v1h-1zM821,748h1v1h-1zM820,752h1v1h-1zM820,756h1v1h-1zM819,760h1v1h-1zM819,764h1v1h-1zM818,768h1v1h-1zM818,772h1v1h-1zM817,776h1v1h-1zM817,780h1v1h-1zM816,784h1v1h-1zM816,788h1v1h-1zM815,792h1v1h-1zM815,796h1v1h-1zM815,800h1v1h-1zM814,804h1v1h-1zM814,808h1v1h-1zM813,812h1v1h-1zM813,816h1v1h-1zM812,820h1v1h-1zM812,824h1v1h-1zM811,828h1v1h-1zM811,832h1v1h-1zM810,836h1v1h-1zM810,840h1v1h-1zM809,844h1v1h-1zM809,848h1v1h-1zM809,852h1v1h-1zM808,856h1v1h-1zM808,860h1v1h-1zM807,864h1v1h-1zM807,868h1v1h-1zM806,872h1v1h-1zM806,876h1v1h-1zM805,880h1v1h-1zM805,884h1v1h-1zM804,888h1v1h-1zM804,892h1v1h-1zM803,896h1v1h-1zM803,900h1v1h-1zM803,904h1v1h-1zM802,908h1v1h-1zM802,912h1v1h-1zM801,916h1v1h-1zM801,920h1v1h-1zM800,924h1v1h-1zM800,928h1v1h-1zM799,932h1v1h-1zM799,936h1v1h-1zM798,940h1v1h-1zM798,944h1v1h-1zM797,948h1v1h-1zM797,952h1v1h-1zM796,956h1v1h-1zM796,960h1v1h-1zM796,964h1v1h-1zM795,968h1v1h-1zM795,972h1v1h-1zM794,976h1v1h-1zM794,980h1v1h-1zM793,984h1v1h-1zM793,988h1v1h-1zM792,992h1v1h-1zM792,996h1v1h-1zM791,1000h1v1h-1zM791,1004h1v1h-1zM790,1008h1v1h-1zM790,1012h1v1h-1z" fill="#e00000"/>
<path d="M832,684h1v1h-1zM836,685h1v1h-1zM840,685h1v1h-1zM844,686h1v1h-1zM848,686h1v1h-1zM852,687h1v1h-1zM856,687h1v1h-1zM860,688h1v1h-1zM864,688h1v1h-1zM868,688h1v1h-1zM872,689h1v1h-1zM876,689h1v1h-1zM880,690h1v1h-1zM884,690h1v1h-1zM888,691h1v1h-1zM892,691h1v1h-1zM896,692h1v1h-1zM900,692h1v1h-1zM904,692h1v1h-1zM908,693h1v1h-1zM912,693h1v1h-1zM916,694h1v1h-1zM920,694h1v1h-1zM924,695h1v1h-1zM928,695h1v1h-1zM932,696h1v1h-1zM936,696h1v1h-1zM940,696h1v1h-1zM944,697h1v1h-1zM948,697h1v1h-1zM952,698h1v1h-1zM956,698h1v1h-1zM960,699h1v1h-1zM964,699h1v1h-1zM968,700h1v1h-1zM972,700h1v1h-1zM976,700h1v1h-1zM980,701h1v1h-1zM984,701h1v1h-1zM988,702h1v1h-1zM992,702h1v1h-1zM996,703h1v1h-1zM1000,703h1v1h-1zM1004,704h1v1h-1zM1008,704h1v1h-1zM1012,704h1v1h-1zM1016,705h1v1h-1zM1020,705h1v1h-1zM1024,706h1v1h-1zM1028,706h1v1h-1zM1032,707h1v1h-1zM1036,707h1v1h-1zM1040,708h1v1h-1zM1044,708h1v1h-1zM1048,708h1v1h-1zM1052,709h1v1h-1zM1056,709h1v1h-1zM1060,710h1v1h-1zM1064,710h1v1h-1zM1068,711h1v1h-1zM1072,711h1v1h-1zM1076,712h1v1h-1zM1080,712h1v1h-1zM1084,712h1v1h-1zM1088,713h1v1h-1zM1092,713h1v1h-1zM1096,714h1v1h-1zM1100,714h1v1h-1zM1104,715h1v1h-1zM1108,715h1v1h-1zM1112,716h1v1h-1zM1116,716h1v1h-1zM1120,716h1v1h-1zM1124,717h1v1h-1zM1128,717h1v1h-1zM1132,718h1v1h-1zM1136,718h1v1h-1zM1140,719h1v1h-1zM1144,719h1v1h-1zM1148,720h1v1h-1zM1152,720h1v1h-1zM1156,720h1v1h-1zM1160,721h1v1h-1zM1164,721h1v1h-1zM1168,722h1v1h-1zM1172,722h1v1h-1zM1176,723h1v1h-1zM1180,723h1v1h-1zM1184,724h1v1h-1zM1188,724h1v1h-1zM1192,724h1v1h-1zM1196,725h1v1h-1zM1200,725h1v1h-1zM1204,726h1v1h-1zM1208,726h1v1h-1zM1212,727h1v1h-1zM1216,727h1v1h-1zM1220,728h1v1h-1zM1224,728h1v1h-1zM1228,728h1v1h-1zM1232,729h1v1h-1zM1236,729h1v1h-1zM1240,730h1v1h-1zM1244,730h1v1h-1zM1248,731h1v1h-1zM1252,731h1v1h-1zM1256,732h1v1h-1zM1260,732h1v1h-1zM1264,732h1v1h-1zM1268,733h1v1h-1zM1272,733h1v1h-1zM1276,734h1v1h-1zM1280,734h1v1h-1zM1284,735h1v1h-1zM1288,735h1v1h-1zM1292,736h1v1h-1zM1296,736h1v1h-1zM1300,736h1v1h-1zM1304,737h1v1h-1zM1308,737h1v1h-1zM1312,738h1v1h-1zM1316,738h1v1h-1zM1320,739h1v1h-1zM1324,739h1v1h-1zM1328,740h1v1h-1zM1332,740h1v1h-1zM1336,740h1v1h-1zM1340,741h1v1h-1zM1344,741h1v1h-1zM1348,742h1v1h-1zM1352,742h1v1h-1zM1356,743h1v1h-1zM1360,743h1v1h-1zM1364,744h1v1h-1zM1368,744h1v1h-1zM1372,744h1v1h-1zM1376,745h1v1h-1zM1380,745h1v1h-1zM1384,746h1v1h-1zM1388,746h1v1h-1zM1392,747h1v1h-1zM1396,747h1v1h-1zM1400,747h1v1h-1zM1404,748h1v1h-1zM1408,748h1v1h-1zM1412,749h1v1h-1zM1416,749h1v1h-1zM1420,750h1v1h-1zM1424,750h1v1h-1zM1428,751h1v1h-1zM1432,751h1v1h-1zM1436,751h1v1h-1zM1440,752h1v1h-1zM1444,752h1v1h-1zM1448,753h1v1h-1zM1452,753h1v1h-1zM1456,754h1v1h-1zM1460,754h1v1h-1zM1464,755h1v1h-1zM1468,755h1v1h-1zM1472,755h1v1h-1zM1476,756h1v1h-1zM1480,756h1v1h-1zM1484,757h1v1h-1zM1488,757h1v1h-1zM1492,758h1v1h-1zM1496,758h1v1h-1zM1500,759h1v1h-1zM1504,759h1v1h-1zM1508,759h1v1h-1zM1512,760h1v1h-1zM1516,760h1v1h-1zM1520,761h1v1h-1zM1524,761h1v1h-1zM1528,762h1v1h-1zM1532,762h1v1h-1zM1536,763h1v1h-1zM1540,763h1v1h-1zM1544,763h1v1h-1zM1548,764h1v1h-1zM1552,764h1v1h-1zM1556,765h1v1h-1zM1560,765h1v1h-1zM1564,766h1v1h-1zM1568,766h1v1h-1zM1572,767h1v1h-1zM1576,767h1v1h-1zM1580,767h1v1h-1zM1584,768h1v1h-1zM1588,768h1v1h-1zM1592,769h1v1h-1zM1596,769h1v1h-1zM1600,770h1v1h-1zM1604,770h1v1h-1zM1608,771h1v1h-1zM1612,771h1v1h-1zM1616,771h1v1h-1zM1620,772h1v1h-1zM1624,772h1v1h-1zM1628,773h1v1h-1zM1632,773h1v1h-1zM1636,774h1v1h-1zM1640,774h1v1h-1zM1644,775h1v1h-1zM1648,775h1v1h-1zM1652,775h1v1h-1zM1656,776h1v1h-1zM1660,776h1v1h-1zM1664,777h1v1h-1zM1668,777h1v1h-1zM1672,778h1v1h-1zM1676,778h1v1h-1zM1680,779h1v1h-1zM1684,779h1v1h-1zM1688,779h1v1h-1zM1692,780h1v1h-1zM1696,780h1v1h-1zM1700,781h1v1h-1zM1704,781h1v1h-1zM1708,782h1v1h-1zM1712,782h1v1h-1zM1716,783h1v1h-1zM1720,783h1v1h-1zM1724,783h1v1h-1zM1728,784h1v1h-1zM1732,784h1v1h-1zM1736,785h1v1h-1zM1740,785h1v1h-1zM1744,786h1v1h-1zM1748,786h1v1h-1zM1752,787h1v1h-1zM1756,787h1v1h-1zM1760,787h1v1h-1zM1764,788h1v1h-1zM1768,788h1v1h-1zM1772,789h1v1h-1zM1776,789h1v1h-1zM1780,790h1v1h-1zM1784,790h1v1h-1zM1788,791h1v1h-1zM1792,791h1v1h-1zM1796,791h1v1h-1zM1800,792h1v1h-1zM1804,792h1v1h-1zM1808,793h1v1h-1zM1812,793h1v1h-1zM1816,794h1v1h-1zM1820,794h1v1h-1zM1824,795h1v1h-1zM1828,795h1v1h-1zM1832,795h1v1h-1zM1836,796h1v1h-1zM1840,796h1v1h-1zM1844,797h1v1h-1zM1848,797h1v1h-1zM1852,798h1v1h-1zM1856,798h1v1h-1zM1860,799h1v1h-1zM1864,799h1v1h-1zM1868,799h1v1h-1zM1872,800h1v1h-1zM1876,800h1v1h-1zM1880,801h1v1h-1zM1884,801h1v1h-1zM1888,802h1v1h-1zM1892,802h1v1h-1zM1896,803h1v1h-1zM1900,803h1v1h-1zM1904,803h1v1h-1zM1908,804h1v1h-1zM1912,804h1v1h-1zM1916,805h1v1h-1z" fill="#00d000"/>
<path d="M840,685h1v1h-1zM844,685h1v1h-1zM848,686h1v1h-1zM852,686h1v1h-1zM856,686h1v1h-1zM860,686h1v1h-1zM864,686h1v1h-1zM868,686h1v1h-1zM872,686h1v1h-1zM876,686h1v1h-1zM880,687h1v1h-1zM884,687h1v1h-1zM888,687h1v1h-1zM892,687h1v1h-1zM896,687h1v1h-1zM900,687h1v1h-1zM904,687h1v1h-1zM908,687h1v1h-1zM912,688h1v1h-1zM916,688h1v1h-1zM920,688h1v1h-1zM924,688h1v1h-1zM928,688h1v1h-1zM932,688h1v1h-1zM936,688h1v1h-1zM940,688h1v1h-1zM944,689h1v1h-1zM948,689h1v1h-1zM952,689h1v1h-1zM956,689h1v1h-1zM960,689h1v1h-1zM964,689h1v1h-1zM968,689h1v1h-1zM972,689h1v1h-1zM976,690h1v1h-1zM980,690h1v1h-1zM984,690h1v1h-1zM988,690h1v1h-1z" fill="#0000e0"/>
<path d="M993,410.5 Q1050.7,393.1 1109.6,415.3 L1106.9,452.2 Q1053.4,433.85 991.8,448.1 Z" fill="url(#cylT)" stroke="#000" stroke-width="2.2" stroke-linejoin="round"/>
<path d="M991.8,448.1 Q1053.4,433.85 1106.9,452.2 L1088.2,505.3 L990.6,501.8 Z" fill="#bf8b00" stroke="#000" stroke-width="2.2" stroke-linejoin="round"/>
<path d="M1052.7,403.1 L1051.4,442" stroke="#000" stroke-width="1.4" fill="none"/>
<ellipse cx="1048" cy="459.6" rx="16.5" ry="4" fill="#ffc400" stroke="#000" stroke-width="1.8"/>
<path d="M990.6,501.8 L1088.2,505.3 L1086.1,584.4 L986.8,581.7 Z" fill="#ffc800" stroke="#000" stroke-width="2.2" stroke-linejoin="round"/>
<path d="M986.8,581.7 L1094.4,585.1 L1093.75,620.6 L985.4,617.1 Z" fill="url(#cylB)" stroke="#000" stroke-width="2.2" stroke-linejoin="round"/>
<path d="M985.4,617.1 L1093.75,620.6 L1084,634.4 L985.4,631 Z" fill="#bf8b00" stroke="#000" stroke-width="2.2" stroke-linejoin="round"/>
<rect x="991" y="408.5" width="4" height="4" fill="#000"/>
<rect x="1050.7" y="401.1" width="4" height="4" fill="#000"/>
<rect x="1107.6" y="413.3" width="4" height="4" fill="#000"/>
<rect x="989.8" y="446.1" width="4" height="4" fill="#000"/>
<rect x="1049.4" y="440" width="4" height="4" fill="#000"/>
<rect x="1104.9" y="450.2" width="4" height="4" fill="#000"/>
<rect x="988.6" y="499.8" width="4" height="4" fill="#000"/>
<rect x="1086.2" y="503.3" width="4" height="4" fill="#000"/>
<rect x="984.8" y="579.7" width="4" height="4" fill="#000"/>
<rect x="1092.4" y="583.1" width="4" height="4" fill="#000"/>
<rect x="1091.75" y="618.6" width="4" height="4" fill="#000"/>
<rect x="983.4" y="615.1" width="4" height="4" fill="#000"/>
<rect x="983.4" y="629" width="4" height="4" fill="#000"/>
<rect x="1082" y="632.4" width="4" height="4" fill="#000"/>
</g></svg>

<!-- status bar -->
<div class="t" style="left:124px;top:1022px;font-size:13px;color:#000">Selecteer objecten. Shift om selectie uit te breiden. Sleep met muis om meerdere te selecteren.</div>
<div class="vl" style="left:1575px;top:1017px;height:20px;background:#a0a0a0"></div>
<div class="t" style="left:1655px;top:1022px;font-size:13px;color:#000">Metingen</div>
<div class="a" style="left:1714px;top:1016px;width:205px;height:23px;border-top:1px solid #a0a0a0;border-left:1px solid #a0a0a0;background:#f0f0f0"></div>

<!-- taskbar -->
<div class="a" style="left:0;top:1040px;width:1920px;height:40px;background:linear-gradient(to right,#26343b 0px,#27343b 1030px,#24313a 1350px,#262b2e 1395px,#262729 1440px,#25292d 1495px,#222e38 1535px,#23303a 1920px)"></div>
<div class="a" style="left:48px;top:1040px;width:344px;height:40px;background:#f0f0f0;border-top:1px solid #dadada"></div>
<div class="t" style="left:88px;top:1053px;font-size:14.8px;color:#000">Typ hier om te zoeken</div>
<div class="t" style="left:1667px;top:1054px;font-size:13.5px;color:#fff">Straks regen</div>
<div class="t" style="left:1821px;top:1045px;font-size:12px;color:#fff;letter-spacing:-0.5px">19:59</div>
<div class="t" style="left:1806px;top:1063px;font-size:11.3px;color:#fff">24-10-2022</div>


<svg class="a" style="left:0;top:0" width="24" height="22" viewBox="0 0 24 22"><path d="M3,11.4 L9.4,3.1 L12.4,6 L11.6,12 L7,16 L4,15 Z" fill="#fff" stroke="#444" stroke-width="1" stroke-dasharray="1.2 .6"/>
<path d="M6.4,7.6 L9.4,3.8 L12.2,6.4 L10,11.6 Z" fill="#f2b070"/>
<path d="M5.4,15 L7,14 L6.4,16.6 Z" fill="#9ab"/>
<path d="M6.2,16.4 L15.6,4.4 L17.2,5.8 L7.8,17.8 Z" fill="#f00" stroke="#222" stroke-width=".7"/>
<path d="M6.2,16.4 L7.8,17.8 L5,19 Z" fill="#554"/></svg>
<svg class="a" style="left:0;top:1014px" width="130" height="26">
<defs><radialGradient id="cream" cx=".65" cy=".4" r=".7"><stop offset="0" stop-color="#fffdf4"/><stop offset="1" stop-color="#e6d4a4"/></radialGradient>
<radialGradient id="bluew" cx=".7" cy=".65" r=".8"><stop offset="0" stop-color="#ffffff"/><stop offset="1" stop-color="#9cc4f0"/></radialGradient></defs>
<circle cx="13" cy="14" r="9" fill="url(#cream)" stroke="#7d4e0a" stroke-width="2.4"/>
<path d="M13,12.5 L13,20.5" stroke="#bbb" stroke-width="1"/>
<ellipse cx="13" cy="10.6" rx="2.4" ry="3.6" fill="#f4a8a0" stroke="#c88" stroke-width=".4"/>
<circle cx="41" cy="14" r="9" fill="url(#cream)" stroke="#7d4e0a" stroke-width="2.4"/>
<circle cx="41" cy="9" r="1.3" fill="#000"/>
<path d="M39,11 L43,11 L43,16 L42,16 L42,20 L40,20 L40,16 L39,16 Z" fill="#000"/>
<circle cx="69" cy="14" r="9" fill="url(#cream)" stroke="#7d4e0a" stroke-width="2.4"/>
<text x="69.4" y="19.6" font-family="Liberation Serif" font-size="16" text-anchor="middle" fill="#5a5a50">G</text>
<rect x="88" y="3" width="1" height="21" fill="#a0a0a0"/>
<circle cx="107" cy="14" r="9" fill="url(#bluew)" stroke="#1a5478" stroke-width="2.4"/>
<text x="107.4" y="19.8" font-family="Liberation Sans" font-size="16" font-weight="bold" text-anchor="middle" fill="#000">?</text>
</svg>
<svg class="a" style="left:0;top:1040px" width="1920" height="40">
<g fill="#fff"><path d="M16,13.4 L23.2,12.6 L23.2,19.4 L16,19.4 Z M24,12.5 L32,12 L32,19.4 L24,19.4 Z M16,20.2 L23.2,20.2 L23.2,27.2 L16,26.6 Z M24,20.2 L32,20.2 L32,28 L24,27.3 Z"/></g>
<rect x="48" y="39" width="344" height="1" fill="#d6d6d6"/>
<circle cx="70" cy="17.6" r="5.2" fill="none" stroke="#111" stroke-width="1.3"/>
<path d="M66.2,21.6 L60.6,27.4" stroke="#111" stroke-width="1.4"/>
<circle cx="416" cy="20" r="7.2" fill="none" stroke="#fff" stroke-width="1.7"/>
<g fill="none" stroke="#fff" stroke-width="1.2"><path d="M456.6,11.8 V14.4 H466.4 V11.8 M456.6,27.2 V24.6 H466.4 V27.2"/><rect x="456.6" y="16.6" width="9.8" height="5.8"/><path d="M470.4,11.8 V14.6 M470.4,19.8 V27.2"/></g>
<rect x="469" y="16" width="3" height="3" fill="#fff"/>
<!-- explorer folder -->
<path d="M504,11 L511,11 L512.6,12.6 L525.6,12.6 L525.6,28 L504,28 Z" fill="#f8c840"/>
<path d="M504,11 L511,11 L512.6,13.6 L504,13.6 Z" fill="#e8a020"/>
<path d="M508,19 L521,19 L521,29 L517.6,29 L517.6,24 L511.4,24 L511.4,29 L508,29 Z" fill="#2f86e6"/>
<!-- cube app -->
<rect x="552" y="7.8" width="24.2" height="24" fill="#fff"/>
<g fill="#40bcd8"><path d="M564,8.4 L574.4,13.4 L564,18.2 L553.6,13.4 Z"/><path d="M553.3,14.8 L563.2,19.6 L563.2,30.6 L553.3,25.7 Z"/><path d="M564.8,19.6 L574.6,14.8 L574.6,25.7 L564.8,30.6 Z"/></g>
<g fill="none" stroke="#fff" stroke-width="1.1"><path d="M561,21.6 Q556.4,18.8 555.8,21.4 L555.8,24.6 Q557,27.8 561.4,29"/><path d="M566.6,29.4 L566.6,21.4 L571.4,19.4 Q573.4,20.6 571.2,22.6 L567.4,23.8 L571.8,26.6"/></g>
<!-- C app -->
<path d="M606,8.8 L623.6,8.8 L623.6,26.4 L619.8,30.2 L602,30.2 L602,12.6 Z" fill="#1a6ee6"/>
<path d="M618.4,15.8 A5.2,5.2 0 1 0 618.4,24.2" fill="none" stroke="#fff" stroke-width="3.8"/>
<!-- chrome -->
<circle cx="662" cy="20" r="12" fill="#de4132"/>
<path d="M662,20 L672.4,14 A12,12 0 0 1 662,32 Z" fill="#fbc02d"/>
<path d="M662,20 L662,32 A12,12 0 0 1 651.6,14 Z" fill="#2f9e48"/>
<circle cx="662" cy="20" r="5.4" fill="#fff"/>
<circle cx="662" cy="20" r="4.2" fill="#3d80f0"/>
<!-- opera -->
<ellipse cx="711" cy="20" rx="11" ry="11.6" fill="none" stroke="#e4163a" stroke-width="1.8"/>
<ellipse cx="711" cy="20" rx="4.8" ry="10" fill="none" stroke="#e4163a" stroke-width="1.6"/>
<!-- sims -->
<rect x="748.6" y="8.4" width="23" height="23" rx="2" fill="#fff"/>
<path d="M750,11 Q750.6,8.6 751.6,10 L751.2,15 Z" fill="#5ac030"/>
<rect x="752.6" y="9.6" width="13" height="4.6" fill="#3a8ad8"/>
<path d="M767,10 L770.6,9.6 L770,15.6 L767.6,15 Z" fill="#50b830"/>
<g><circle cx="752.6" cy="20" r="2.4" fill="#8a2a50"/><circle cx="757.4" cy="19" r="2.6" fill="#d8b080"/><circle cx="765" cy="19.4" r="2.6" fill="#b8b0b0"/>
<rect x="749" y="21.6" width="22.6" height="9.8" fill="#d89a80"/>
<circle cx="755.4" cy="23.4" r="2.4" fill="#6a8a40"/><circle cx="759.8" cy="26" r="3" fill="#e8b040"/><circle cx="764.8" cy="26.4" r="2.6" fill="#c03030"/><circle cx="768.6" cy="22.4" r="2.4" fill="#2a2a3a"/><circle cx="752" cy="27" r="2.6" fill="#6a4030"/></g>
<!-- teams -->
<circle cx="809.6" cy="13" r="3.2" fill="#7b83eb"/>
<circle cx="817.4" cy="14.6" r="2.4" fill="#5059c9"/>
<rect x="814" y="18" width="7" height="10" rx="2" fill="#5059c9"/>
<rect x="803" y="17" width="13" height="13" rx="3" fill="#7b83eb"/>
<rect x="797" y="15" width="12.6" height="12.6" rx="1" fill="#4b53bc"/>
<path d="M799.6,18.4 L807,18.4 M803.3,18.4 L803.3,25" stroke="#fff" stroke-width="2"/>
<circle cx="817" cy="27.6" r="5" fill="#92c353" stroke="#27333a" stroke-width="1"/>
<path d="M814.6,27.6 L816.4,29.4 L819.6,25.8" fill="none" stroke="#fff" stroke-width="1.4"/>
<!-- word -->
<rect x="852" y="9" width="18" height="21" rx="1.6" fill="#185abd"/>
<rect x="852" y="9" width="18" height="7" fill="#41a5ee"/>
<rect x="852" y="16" width="18" height="7" fill="#2b7cd3"/>
<rect x="846" y="14" width="12" height="12" rx="1" fill="#185abd" stroke="#103a8a" stroke-width=".6"/>
<text x="852" y="24" font-family="Liberation Sans" font-size="10" font-weight="bold" text-anchor="middle" fill="#fff">W</text>
<!-- calculator -->
<rect x="898" y="8" width="18" height="24" rx="1.6" fill="#5a6268"/>
<rect x="900" y="10" width="14" height="4" fill="#4ec8f4"/>
<g fill="#c8ccd0"><rect x="900" y="16" width="4" height="3.6"/><rect x="905" y="16" width="4" height="3.6"/><rect x="910" y="16" width="4" height="3.6"/><rect x="900" y="21" width="4" height="3.6"/><rect x="905" y="21" width="4" height="3.6"/><rect x="900" y="26" width="4" height="3.6"/><rect x="905" y="26" width="4" height="3.6"/></g>
<rect x="910" y="21" width="4" height="8.6" fill="#103a8a"/>
<!-- photos -->
<rect x="945" y="9" width="22.4" height="22" rx="1.2" fill="#27a8e6"/>
<path d="M945,24 L953,16 L962,25 L967.4,21 L967.4,31 L945,31 Z" fill="#1a4a9a"/>
<path d="M958,20 L962,18 L967.4,23 L967.4,31 L960,31 Z" fill="#6a7ae0"/>
<circle cx="960" cy="14" r="1.8" fill="#e8f4ff"/>
<!-- sketchup active -->
<rect x="981" y="0" width="44" height="40" fill="#505a60"/>
<rect x="1025" y="0" width="1" height="40" fill="#2c3439"/><rect x="1026" y="0" width="3" height="40" fill="#454d52"/>
<g transform="translate(989.5,4.6) scale(1.5,1.45)"><path d="M3,11.4 L9.4,3.1 L12.4,6 L11.6,12 L7,16 L4,15 Z" fill="#fff" stroke="#444" stroke-width="1" stroke-dasharray="1.2 .6"/>
<path d="M6.4,7.6 L9.4,3.8 L12.2,6.4 L10,11.6 Z" fill="#f2b070"/>
<path d="M5.4,15 L7,14 L6.4,16.6 Z" fill="#9ab"/>
<path d="M6.2,16.4 L15.6,4.4 L17.2,5.8 L7.8,17.8 Z" fill="#f00" stroke="#222" stroke-width=".7"/>
<path d="M6.2,16.4 L7.8,17.8 L5,19 Z" fill="#554"/></g>
<!-- underlines -->
<g fill="#76b9ed"><rect x="593" y="38" width="31" height="2"/><rect x="642" y="38" width="40" height="2"/><rect x="740" y="38" width="40" height="2"/><rect x="789" y="38" width="40" height="2"/><rect x="838" y="38" width="40" height="2"/><rect x="887" y="38" width="40" height="2"/><rect x="936" y="38" width="40" height="2"/><rect x="981" y="38" width="44" height="2"/></g>
<g fill="#4d84b0"><rect x="625" y="38" width="9" height="2"/><rect x="1025" y="38" width="4" height="2"/></g>
<!-- weather umbrella -->
<path d="M1635,22 Q1638,12 1646,12 Q1654,12 1657,22 Q1654,20 1651,22 Q1648,20 1646,22 Q1643,20 1640,22 Q1637,20 1635,22 Z" fill="#7ec8f0"/>
<path d="M1646,22 L1646,30 Q1646,32 1643.6,32 Q1641.6,32 1641.6,30" fill="none" stroke="#888" stroke-width="1.4"/>
<g stroke="#4aa8e8" stroke-width="1.4"><path d="M1650,9 L1651,7.6 M1653,11 L1654,9.6 M1656,13 L1657,11.6 M1654,8 L1655,6.6 M1657,16 L1658,14.6"/></g>
<!-- chevron -->
<path d="M1761,23 L1767,17 L1773,23" fill="none" stroke="#fff" stroke-width="1.3"/>
<!-- meet now -->
<rect x="1786" y="15" width="8" height="10" rx="2" fill="none" stroke="#fff" stroke-width="1.2"/>
<path d="M1794,18.6 L1797.2,16.6 L1797.2,23.4 L1794,21.4" fill="none" stroke="#fff" stroke-width="1.1"/>
<path d="M1787,12.4 Q1791,10.6 1795,12.4 M1787,27.6 Q1791,29.4 1795,27.6" fill="none" stroke="#fff" stroke-width="1"/>
<!-- notification -->
<path d="M1879,12 L1899,12 L1899,26 L1886,26 L1883,30 L1883,26 L1879,26 Z" fill="#fff"/>
<path d="M1882,15.6 L1896,15.6 M1882,18.6 L1896,18.6 M1882,21.6 L1891,21.6" stroke="#27333a" stroke-width="1"/>
<circle cx="1894.6" cy="28" r="7" fill="#2a2a2a" stroke="#5a5a5a" stroke-width="1"/>
<text x="1894.6" y="32.6" font-family="Liberation Sans" font-size="11" font-weight="bold" text-anchor="middle" fill="#fff">1</text>
<rect x="1915" y="0" width="1" height="40" fill="#5a666e"/>
</svg>
</body></html>
